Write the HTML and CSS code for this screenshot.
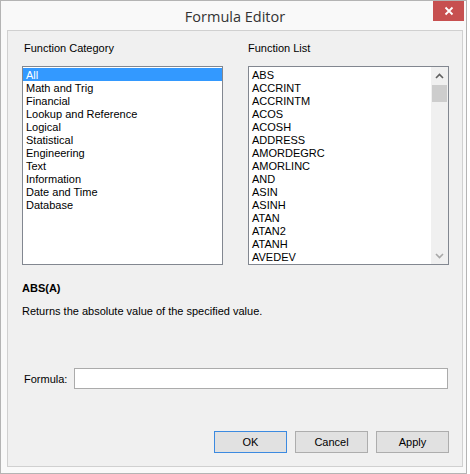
FILE: index.html
```html
<!DOCTYPE html>
<html>
<head>
<meta charset="utf-8">
<link rel="stylesheet" href="styles.css">
</head>
<body>
<div class="window">
  <div class="titlebar">
    <div class="title">Formula Editor</div>
    <div class="close"><svg width="10" height="10" viewBox="0 0 10 10"><path d="M1.5 1.5 L8.5 8.5 M8.5 1.5 L1.5 8.5" stroke="#fff" stroke-width="1.8"/></svg></div>
  </div>
  <div class="panel">
    <div class="columns">
      <div class="col">
        <div class="label">Function Category</div>
        <ul class="list">
          <li class="sel">All</li>
          <li>Math and Trig</li>
          <li>Financial</li>
          <li>Lookup and Reference</li>
          <li>Logical</li>
          <li>Statistical</li>
          <li>Engineering</li>
          <li>Text</li>
          <li>Information</li>
          <li>Date and Time</li>
          <li>Database</li>
        </ul>
      </div>
      <div class="col">
        <div class="label">Function List</div>
        <div class="list flist">
          <ul class="items">
            <li>ABS</li><li>ACCRINT</li><li>ACCRINTM</li><li>ACOS</li><li>ACOSH</li>
            <li>ADDRESS</li><li>AMORDEGRC</li><li>AMORLINC</li><li>AND</li><li>ASIN</li>
            <li>ASINH</li><li>ATAN</li><li>ATAN2</li><li>ATANH</li><li>AVEDEV</li>
          </ul>
          <div class="scrollbar">
            <div class="arrow"><svg width="9" height="6" viewBox="0 0 9 6"><path d="M1 5 L4.5 1.5 L8 5" fill="none" stroke="#606060" stroke-width="1.6"/></svg></div>
            <div class="thumb"></div>
            <div class="track"></div>
            <div class="arrow"><svg width="9" height="6" viewBox="0 0 9 6"><path d="M1 1 L4.5 4.5 L8 1" fill="none" stroke="#a8a8a8" stroke-width="1.6"/></svg></div>
          </div>
        </div>
      </div>
    </div>
    <div class="sig">ABS(A)</div>
    <div class="desc">Returns the absolute value of the specified value.</div>
    <div class="formula">
      <span class="flabel">Formula:</span>
      <div class="input"></div>
    </div>
    <div class="buttons">
      <div class="btn default">OK</div>
      <div class="btn">Cancel</div>
      <div class="btn">Apply</div>
    </div>
  </div>
</div>
</body>
</html>
```
FILE: styles.css
```css
* { box-sizing: border-box; }
html, body { margin: 0; padding: 0; background: #ffffff; }
body { font-family: "Liberation Sans", Arial, sans-serif; font-size: 11px; color: #000; }

.window {
  width: 467px;
  height: 474px;
  border: 1px solid #b4b4b4;
  background: #f9f9f9;
  display: flex;
  flex-direction: column;
}
.titlebar {
  height: 29px;
  position: relative;
  display: flex;
  justify-content: center;
  align-items: center;
}
.title {
  font-family: "Open Sans", "Segoe UI", sans-serif;
  font-size: 14.5px;
  color: #333;
  padding-top: 1px;
  padding-left: 3px;
}
.close {
  position: absolute;
  right: 2px;
  top: 0;
  width: 31px;
  height: 20px;
  background: #c75050;
  display: flex;
  align-items: center;
  justify-content: center;
}
.panel {
  margin-left: 6px;
  width: 456px;
  height: 437px;
  border: 1px solid #d0d0d0;
  background: #f0f0f0;
  padding: 11px 13px 13px 14px;
  display: flex;
  flex-direction: column;
}
.columns { display: flex; gap: 25px; }
.col { width: 201px; display: flex; flex-direction: column; }
.label { line-height: 13px; height: 13px; margin-left: 2px; margin-bottom: 11px; }
.col + .col .label { margin-left: 0; }
.list {
  list-style: none;
  margin: 0;
  padding: 1px 0 0 0;
  height: 199px;
  border: 1px solid #828790;
  background: #fff;
}
.list li { line-height: 14px; height: 13px; padding-left: 3px; white-space: nowrap; }
.list li.sel { background: #3399ff; color: #fff; }
.flist { display: flex; padding: 0; }
.items { list-style: none; margin: 0; padding: 1px 0 0 0; flex: 1; }
.scrollbar {
  width: 17px;
  background: #f0f0f0;
  display: flex;
  flex-direction: column;
}
.arrow { height: 17px; display: flex; align-items: center; justify-content: center; padding-top: 1px; }
.thumb { height: 17px; margin: 1px 1px 0 1px; background: #cdcdcd; }
.track { flex: 1; }

.sig { font-weight: bold; line-height: 13px; margin-top: 17px; }
.desc { line-height: 13px; margin-top: 10px; }
.formula { display: flex; align-items: center; margin-top: 50px; }
.flabel { width: 52px; padding-left: 2px; }
.input { width: 374px; height: 21px; background: #fff; border: 1px solid #ababab; }
.buttons { display: flex; justify-content: flex-end; gap: 8px; margin-top: 42px; }
.btn {
  width: 73px;
  height: 22px;
  border: 1px solid #adadad;
  background: #e1e1e1;
  display: flex;
  align-items: center;
  justify-content: center;
}
.btn.default { border-color: #3c8ae0; }
```
